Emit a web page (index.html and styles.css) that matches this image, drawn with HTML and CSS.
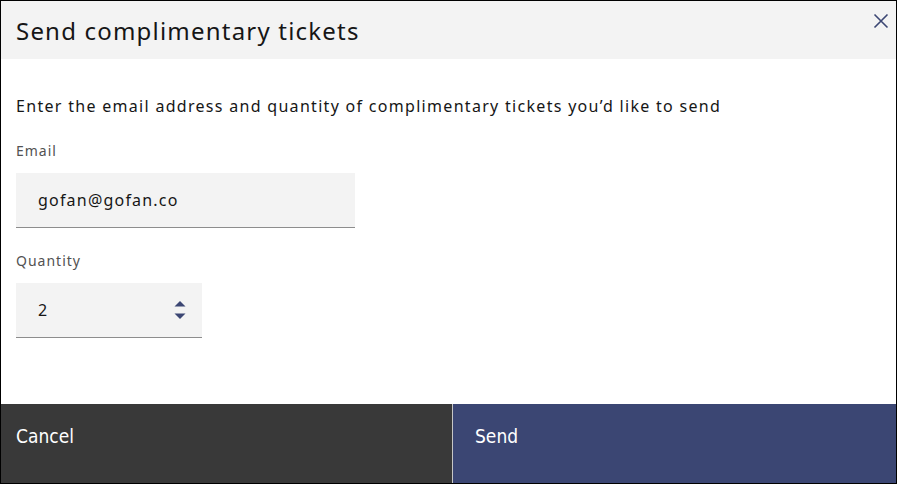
FILE: index.html
```html
<!DOCTYPE html>
<html lang="en">
<head>
<meta charset="utf-8">
<title>Send complimentary tickets</title>
<link rel="stylesheet" href="styles.css">
</head>
<body>
<div class="modal">
  <div class="modal-header">
    <h2 class="modal-title">Send complimentary tickets</h2>
    <button class="close-btn" aria-label="Close">
      <svg width="16" height="16" viewBox="0 0 16 16"><path d="M1.5 1.5 L14.5 14.5 M14.5 1.5 L1.5 14.5" stroke="#3b4673" stroke-width="1.6" fill="none"/></svg>
    </button>
  </div>
  <div class="modal-body">
    <p class="desc">Enter the email address and quantity of complimentary tickets you’d like to send</p>
    <div class="field">
      <label class="label">Email</label>
      <div class="input email-input">gofan@gofan.co</div>
    </div>
    <div class="field">
      <label class="label">Quantity</label>
      <div class="input qty-input">
        <span>2</span>
        <span class="spinner">
          <svg width="12" height="20" viewBox="0 0 12 20"><path d="M6 1 L11.5 6.5 L0.5 6.5 Z" fill="#3b4673"/><path d="M0.5 13.5 L11.5 13.5 L6 19 Z" fill="#3b4673"/></svg>
        </span>
      </div>
    </div>
  </div>
  <div class="modal-footer">
    <button class="btn btn-secondary">Cancel</button>
    <button class="btn btn-primary">Send</button>
  </div>
</div>
</body>
</html>
```

FILE: styles.css
```css
* { box-sizing: border-box; }
html, body { margin: 0; padding: 0; background: #fff; }
body {
  font-family: "Noto Sans", "Open Sans", sans-serif;
  color: #161616;
}
.modal {
  width: 897px;
  height: 484px;
  border: 1px solid #000;
  display: flex;
  flex-direction: column;
  background: #fff;
}
.modal-header {
  height: 58px;
  background: #f3f3f3;
  display: flex;
  align-items: center;
  justify-content: space-between;
  padding: 0 1px 0 15px;
  flex: none;
}
.modal-title {
  margin: 0;
  font-size: 24px;
  font-weight: 400;
  line-height: 30px;
  letter-spacing: 1.2px;
  color: #161616;
  padding-top: 1px;
}
.close-btn {
  border: none;
  background: transparent;
  padding: 0;
  width: 28px;
  height: 28px;
  display: flex;
  align-items: center;
  justify-content: center;
  align-self: flex-start;
  margin-top: 6px;
}
.modal-body {
  flex: 1;
  padding: 36px 15px 0 15px;
}
.desc {
  margin: 0 0 25px 0;
  font-size: 16px;
  line-height: 22px;
  letter-spacing: 1.3px;
  color: #161616;
}
.field { display: flex; flex-direction: column; margin-bottom: 24px; }
.label {
  font-size: 14px;
  line-height: 18px;
  letter-spacing: 1px;
  color: #525252;
  margin-bottom: 13px;
}
.input {
  height: 55px;
  background: #f3f3f3;
  border-bottom: 1px solid #8d8d8d;
  display: flex;
  align-items: center;
  padding-left: 22px;
  font-size: 16px;
  letter-spacing: 1.2px;
  color: #161616;
}
.email-input { width: 339px; }
.qty-input { width: 186px; justify-content: space-between; padding-right: 16px; }
.spinner { display: flex; align-items: center; }
.modal-footer {
  height: 79px;
  display: flex;
  flex: none;
}
.btn {
  border: none;
  margin: 0;
  height: 100%;
  font-family: "DejaVu Sans Condensed", "DejaVu Sans", sans-serif;
  font-stretch: condensed;
  font-size: 19px;
  color: #fff;
  text-align: left;
  display: flex;
  align-items: flex-start;
  padding-top: 21px;
}
.btn-secondary {
  width: 452px;
  background: #393939;
  padding-left: 15px;
  border-right: 1px solid #c6c6c6;
}
.btn-primary {
  flex: 1;
  background: #3b4673;
  padding-left: 22px;
}
```
